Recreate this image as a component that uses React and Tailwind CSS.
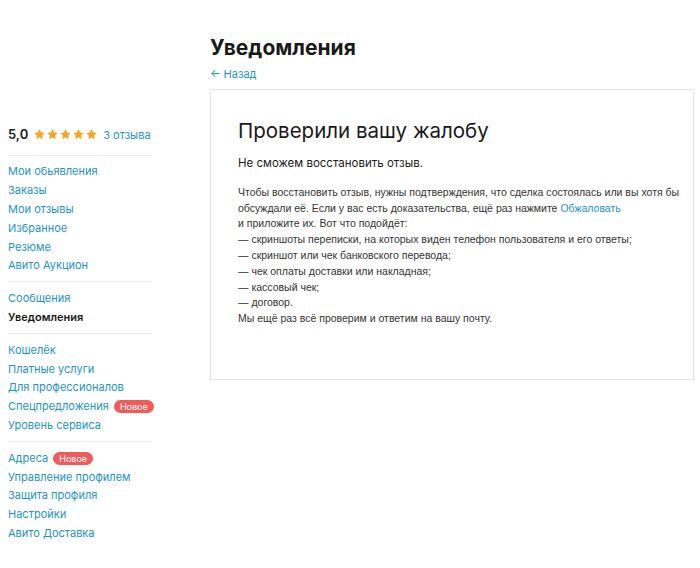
import React from "react";

const groups = [
  [
    { label: "Мои обьявления" },
    { label: "Заказы" },
    { label: "Мои отзывы" },
    { label: "Избранное" },
    { label: "Резюме" },
    { label: "Авито Аукцион" },
  ],
  [{ label: "Сообщения" }, { label: "Уведомления", active: true }],
  [
    { label: "Кошелёк" },
    { label: "Платные услуги" },
    { label: "Для профессионалов" },
    { label: "Спецпредложения", badge: true },
    { label: "Уровень сервиса" },
  ],
  [
    { label: "Адреса", badge: true },
    { label: "Управление профилем" },
    { label: "Защита профиля" },
    { label: "Настройки" },
    { label: "Авито Доставка" },
  ],
];

function Star() {
  return (
    <svg width="13" height="13" viewBox="0 0 24 24" fill="#f5a623">
      <path d="M12 2l3 6.3 6.8.8-5 4.7 1.3 6.8L12 17.2l-6.1 3.4 1.3-6.8-5-4.7 6.8-.8z" />
    </svg>
  );
}

export default function App() {
  return (
    <div className="min-h-[568px] bg-white font-['Inter',sans-serif] text-[#1a1a1a]">
      <div className="flex">
        {/* боковое меню */}
        <aside className="w-[144px] ml-2 pt-[125px] shrink-0">
          <div className="flex items-center gap-[5px] pb-[10px] border-b border-[#ececec]">
            <span className="text-[13px] font-semibold">5,0</span>
            <span className="flex gap-0">
              <Star />
              <Star />
              <Star />
              <Star />
              <Star />
            </span>
            <span className="text-[11px] text-[#1e93c7]">3 отзыва</span>
          </div>
          {groups.map((g, i) => (
            <div
              key={i}
              className={`pt-[7px] pb-[6px] ${i < groups.length - 1 ? "border-b border-[#ececec]" : ""}`}
            >
              {g.map(item => (
                <div key={item.label} className="flex items-center gap-[5px] h-[18.8px] leading-none">
                  <span
                    className={`text-[11px] ${item.active ? "font-semibold text-[#1a1a1a]" : "text-[#1e93c7]"}`}
                  >
                    {item.label}
                  </span>
                  {item.badge && (
                    <span className="bg-[#ef5a5a] text-white text-[9px] leading-none px-[6px] py-[2px] rounded-full">
                      Новое
                    </span>
                  )}
                </div>
              ))}
            </div>
          ))}
        </aside>

        {/* контент */}
        <main className="ml-[58px] w-[484px] pt-[34px]">
          <h1 className="text-[21px] font-bold leading-[28px]">Уведомления</h1>
          <a className="block text-[11px] text-[#1e93c7] mt-[4px]">← Назад</a>
          <div className="mt-[6px] h-[291px] border border-[#e4e4e4] px-[27px] pt-[28px] font-['Liberation_Sans',Arial,sans-serif]">
            <h2 className="font-['Inter',sans-serif] text-[20.5px] leading-[26px] text-[#1a1a1a]">
              Проверили вашу жалобу
            </h2>
            <p className="mt-[11px] font-['Inter',sans-serif] text-[11.5px] text-[#1a1a1a]">
              Не сможем восстановить отзыв.
            </p>
            <div className="mt-[13px] text-[10.5px] leading-[15.8px] text-[#333] whitespace-nowrap">
              <p>
                Чтобы восстановить отзыв, нужны подтверждения, что сделка состоялась или вы хотя бы
                <br />
                обсуждали её. Если у вас есть доказательства, ещё раз нажмите{" "}
                <span className="text-[#1e93c7]">Обжаловать</span>
              </p>
              <p>и приложите их. Вот что подойдёт:</p>
              <p>— скриншоты переписки, на которых виден телефон пользователя и его ответы;</p>
              <p>— скриншот или чек банковского перевода;</p>
              <p>— чек оплаты доставки или накладная;</p>
              <p>— кассовый чек;</p>
              <p>— договор.</p>
              <p>Мы ещё раз всё проверим и ответим на вашу почту.</p>
            </div>
          </div>
        </main>
      </div>
    </div>
  );
}
